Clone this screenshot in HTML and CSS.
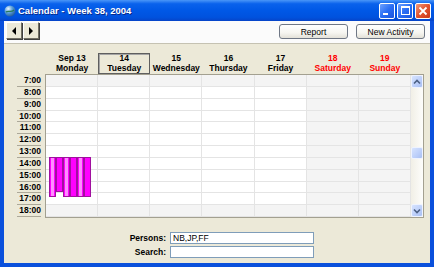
FILE: index.html
```html
<!DOCTYPE html>
<html lang="en">
<head>
    <meta charset="UTF-8">
    <title>Calendar - Week 38, 2004</title>
    <link rel="stylesheet" href="styles.css">
</head>
<body>
    <div class="window">
        <div class="titlebar">
            <svg class="app-icon" width="12" height="12" viewBox="0 0 12 12">
                <defs>
                    <radialGradient id="globe" cx="0.35" cy="0.3" r="0.8">
                        <stop offset="0" stop-color="#e8f4ff"/>
                        <stop offset="0.45" stop-color="#5a9fd8"/>
                        <stop offset="1" stop-color="#1b4f8f"/>
                    </radialGradient>
                </defs>
                <circle cx="6" cy="6" r="5.5" fill="url(#globe)"/>
                <path d="M2 7 C4 5 7 8 10 5" stroke="#2b7a5a" stroke-width="1.2" fill="none"/>
            </svg>
            <span class="title">Calendar - Week 38, 2004</span>
            <div class="title-buttons">
                <div class="tbtn"><span class="min-glyph"></span></div>
                <div class="tbtn"><span class="max-glyph"></span></div>
                <div class="tbtn close">
                    <svg width="10" height="10" viewBox="0 0 10 10"><path d="M1.5 1.5 L8.5 8.5 M8.5 1.5 L1.5 8.5" stroke="#fff" stroke-width="1.8"/></svg>
                </div>
            </div>
        </div>

        <div class="client">
            <div class="toolbar">
                <div class="nav-btn"><span class="tri-left"></span></div>
                <div class="nav-btn"><span class="tri-right"></span></div>
                <div class="spacer"></div>
                <button class="btn">Report</button>
                <button class="btn">New Activity</button>
            </div>

            <div class="calendar">
                <div class="cal-head">
                    <div class="head-spacer"></div>
                    <div class="day"><span>Sep 13</span><span>Monday</span></div>
                    <div class="day today"><span>14</span><span>Tuesday</span></div>
                    <div class="day"><span>15</span><span>Wednesday</span></div>
                    <div class="day"><span>16</span><span>Thursday</span></div>
                    <div class="day"><span>17</span><span>Friday</span></div>
                    <div class="day weekend"><span>18</span><span>Saturday</span></div>
                    <div class="day weekend"><span>19</span><span>Sunday</span></div>
                </div>

                <div class="cal-body">
                    <div class="times" id="times"></div>
                    <div class="frame">
                        <div class="grid" id="grid"></div>
                        <div class="scroll">
                            <div class="sbtn">
                                <svg width="8" height="6" viewBox="0 0 8 6"><path d="M1 4.5 L4 1.5 L7 4.5" stroke="#4d6185" stroke-width="1.6" fill="none"/></svg>
                            </div>
                            <div class="track"><div class="thumb"></div></div>
                            <div class="sbtn">
                                <svg width="8" height="6" viewBox="0 0 8 6"><path d="M1 1.5 L4 4.5 L7 1.5" stroke="#4d6185" stroke-width="1.6" fill="none"/></svg>
                            </div>
                        </div>
                    </div>
                </div>
            </div>

            <div class="filters">
                <div class="field">
                    <label for="persons">Persons:</label>
                    <input type="text" id="persons" value="NB,JP,FF">
                </div>
                <div class="field">
                    <label for="search">Search:</label>
                    <input type="text" id="search">
                </div>
            </div>
        </div>
    </div>

    <script>
        const rowHeight = 11.85;
        const firstHour = 7;
        const hours = 12;

        // activities on Monday: start hour, end hour, striped
        const activities = [
            { start: 14, end: 17.4, striped: true },
            { start: 14, end: 17, striped: false },
            { start: 14, end: 17.4, striped: true },
            { start: 14, end: 17.4, striped: false },
            { start: 14, end: 17.4, striped: true },
            { start: 14, end: 17.4, striped: false }
        ];

        const times = document.getElementById('times');
        const grid = document.getElementById('grid');

        for (let h = 0; h < hours; h++) {
            const label = document.createElement('div');
            label.className = 'time';
            label.textContent = (firstHour + h) + ':00';
            times.appendChild(label);

            const row = document.createElement('div');
            row.className = 'row';
            if (h === 0 || h === hours - 1) row.classList.add('off');
            for (let d = 0; d < 7; d++) {
                const cell = document.createElement('div');
                cell.className = 'cell';
                if (d >= 5) cell.classList.add('weekend');
                row.appendChild(cell);
            }
            grid.appendChild(row);
        }

        activities.forEach((a, i) => {
            const bar = document.createElement('div');
            bar.className = a.striped ? 'activity striped' : 'activity';
            bar.style.left = (3 + i * 7) + 'px';
            bar.style.top = ((a.start - firstHour) * rowHeight - 1) + 'px';
            bar.style.height = ((a.end - a.start) * rowHeight) + 'px';
            grid.appendChild(bar);
        });
    </script>
</body>
</html>
```

FILE: styles.css
```css
body {
    margin: 0;
    font-family: "Liberation Sans", Arial, sans-serif;
    font-size: 8.5px;
    color: #000;
}
.window {
    width: 434px;
    height: 267px;
    background-color: #0a50dc;
    display: flex;
    flex-direction: column;
    overflow: hidden;
}
.titlebar {
    height: 21px;
    flex-shrink: 0;
    display: flex;
    align-items: center;
    padding-left: 4px;
    background: linear-gradient(to bottom, #4a96f8 0%, #0a62ec 18%, #0058e6 50%, #0052de 82%, #0644c8 100%);
}
.app-icon {
    margin-right: 2px;
}
.title {
    color: #fff;
    font-weight: bold;
    font-size: 9.5px;
    text-shadow: 1px 1px 0 #0a2a8a;
    flex: 1;
}
.title-buttons {
    display: flex;
    gap: 2px;
    margin-right: 3px;
}
.tbtn {
    width: 14px;
    height: 14px;
    border: 1px solid #fff;
    border-radius: 2px;
    background: linear-gradient(135deg, #6fa2ff 0%, #2a6ef4 50%, #1a54dc 100%);
    display: flex;
    align-items: center;
    justify-content: center;
    position: relative;
}
.tbtn.close {
    background: linear-gradient(135deg, #f29a7c 0%, #e2532e 50%, #c8381a 100%);
}
.min-glyph {
    width: 5px;
    height: 2px;
    background: #fff;
    position: absolute;
    left: 3px;
    bottom: 3px;
}
.max-glyph {
    width: 7px;
    height: 6px;
    border: 1px solid #fff;
    border-top-width: 2px;
}
.client {
    flex: 1;
    margin: 0 4px 4px;
    background-color: #ece9d8;
    display: flex;
    flex-direction: column;
}
.toolbar {
    height: 21px;
    background-color: #fbfbfb;
    border-bottom: 1px solid #c5c2b2;
    display: flex;
    align-items: flex-start;
    padding: 1px 5px 0 2px;
    gap: 1px;
}
.nav-btn {
    width: 14px;
    height: 15px;
    background-color: #ece9d8;
    border: 1px solid;
    border-color: #fff #716f64 #716f64 #fff;
    box-shadow: 1px 1px 0 #404040;
    display: flex;
    align-items: center;
    justify-content: center;
}
.tri-left {
    border-top: 4px solid transparent;
    border-bottom: 4px solid transparent;
    border-right: 4px solid #000;
}
.tri-right {
    border-top: 4px solid transparent;
    border-bottom: 4px solid transparent;
    border-left: 4px solid #000;
}
.spacer {
    flex: 1;
}
.btn {
    width: 69px;
    height: 15px;
    margin-top: 2px;
    margin-left: 7px;
    padding: 0;
    font-family: "Liberation Sans", Arial, sans-serif;
    font-size: 8.5px;
    color: #000;
    border: 1px solid #6f7785;
    border-radius: 3px;
    background: linear-gradient(to bottom, #ffffff 0%, #f6f5f0 60%, #e3e1d8 100%);
}
.calendar {
    padding-top: 9px;
}
.cal-head {
    display: flex;
    height: 21px;
}
.head-spacer {
    width: 42px;
}
.day {
    width: 52.14px;
    box-sizing: border-box;
    display: flex;
    flex-direction: column;
    align-items: center;
    justify-content: center;
    font-weight: bold;
    line-height: 9.5px;
}
.day.today {
    border: 1px solid #5f5f5f;
    box-shadow: inset 1px 1px 0 #a5a5a5;
}
.day.weekend {
    color: #ff0000;
}
.cal-body {
    display: flex;
}
.times {
    width: 41px;
    display: flex;
    flex-direction: column;
    align-items: flex-end;
    padding-top: 1px;
}
.time {
    width: 24px;
    height: 10.85px;
    margin-right: 4px;
    text-align: right;
    font-weight: bold;
    line-height: 11px;
    border-bottom: 1px solid #aca899;
}
.frame {
    display: flex;
    border: 1px solid #a3a090;
}
.grid {
    width: 365px;
    position: relative;
    background-color: #fff;
}
.row {
    display: flex;
    height: 11.85px;
}
.cell {
    width: 52.14px;
    box-sizing: border-box;
    border-right: 1px solid #e4e4e4;
    border-bottom: 1px solid #e4e4e4;
}
.cell.weekend,
.row.off .cell {
    background-color: #f4f4f4;
}
.activity {
    position: absolute;
    width: 7px;
    box-sizing: border-box;
    border: 1px solid #a0109e;
    background-color: #ff00ff;
}
.activity.striped {
    background: linear-gradient(to right, #ff00ff 0 1px, #ff8cff 1px 4px, #ff00ff 4px);
}
.scroll {
    width: 12px;
    display: flex;
    flex-direction: column;
    background: linear-gradient(to right, #f1efe6, #fdfdfb);
}
.sbtn {
    height: 11px;
    border: 1px solid #eef3ff;
    border-radius: 2px;
    box-sizing: content-box;
    width: 10px;
    background: linear-gradient(135deg, #d6e3fe 0%, #bccffa 60%, #a9c0f2 100%);
    display: flex;
    align-items: center;
    justify-content: center;
}
.track {
    flex: 1;
}
.thumb {
    margin-top: 59px;
    height: 10px;
    width: 10px;
    border: 1px solid #eef3ff;
    border-radius: 2px;
    background: linear-gradient(135deg, #d6e3fe 0%, #bccffa 60%, #a9c0f2 100%);
}
.filters {
    margin-top: 14px;
    display: flex;
    flex-direction: column;
    gap: 2px;
}
.field {
    display: flex;
    align-items: center;
}
.field label {
    width: 162px;
    padding-right: 4px;
    text-align: right;
    font-weight: bold;
}
.field input {
    width: 144px;
    height: 12px;
    box-sizing: border-box;
    padding: 0 2px;
    border: 1px solid #7f9db9;
    font-family: "Liberation Sans", Arial, sans-serif;
    font-size: 8.5px;
}
```
